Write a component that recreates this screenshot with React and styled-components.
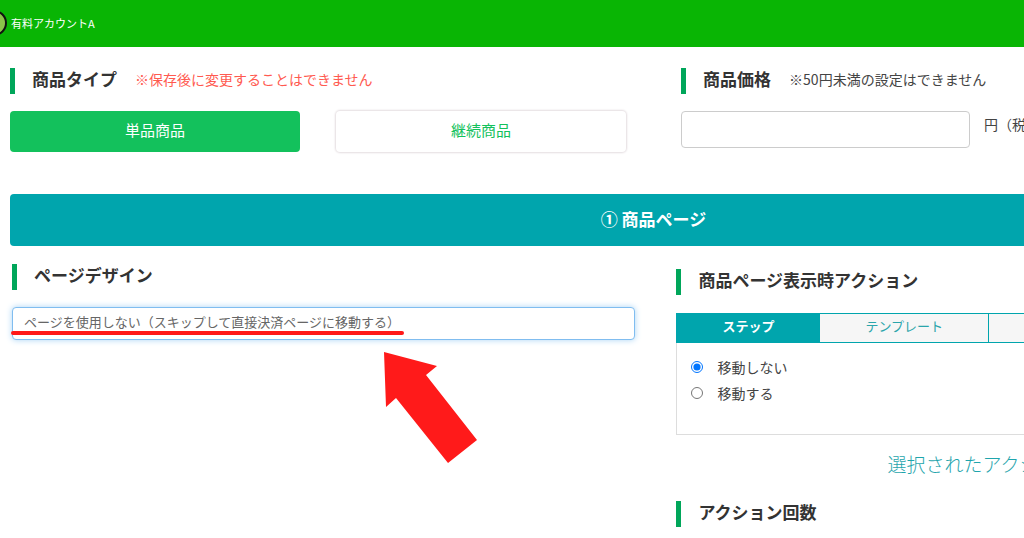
import React, { useState } from "react";
import styled, { createGlobalStyle } from "styled-components";

const tabs = ["ステップ", "テンプレート", "テキスト"];
const moves = ["移動しない", "移動する"];

const App = () => {
  const [type, setType] = useState("単品商品");
  const [tab, setTab] = useState("ステップ");
  const [move, setMove] = useState("移動しない");

  return (
    <>
      <GlobalStyle />
      {/*header starts*/}
      <Header>
        <Avatar />
        <span>有料アカウントA</span>
      </Header>
      {/*header ends*/}

      <Main>
        {/*type and price starts*/}
        <TopRow>
          <section>
            <Title>
              商品タイプ
              <Note $red>※保存後に変更することはできません</Note>
            </Title>
            <TypeButtons>
              {["単品商品", "継続商品"].map((name) => (
                <TypeButton
                  key={name}
                  type="button"
                  $active={type === name}
                  onClick={() => setType(name)}
                >
                  {name}
                </TypeButton>
              ))}
            </TypeButtons>
          </section>
          <section>
            <Title>
              <label htmlFor="price">商品価格</label>
              <Note>※50円未満の設定はできません</Note>
            </Title>
            <PriceRow>
              <PriceInput id="price" type="text" />
              <span>円（税込）</span>
            </PriceRow>
          </section>
        </TopRow>
        {/*type and price ends*/}

        <Banner>① 商品ページ</Banner>

        {/*page settings starts*/}
        <PageRow>
          <Design>
            <Title>
              <label htmlFor="design">ページデザイン</label>
            </Title>
            <SelectBox>
              <Select id="design">
                <option>
                  ページを使用しない（スキップして直接決済ページに移動する）
                </option>
              </Select>
              <Underline />
              <Arrow viewBox="0 0 94 112" aria-hidden="true">
                <path d="M0 0 53 14 42 23 93 88 64 111 12 46 2 55Z" />
              </Arrow>
            </SelectBox>
          </Design>
          <Actions>
            <Title>商品ページ表示時アクション</Title>
            <Tabs>
              {tabs.map((name) => (
                <Tab
                  key={name}
                  type="button"
                  $active={tab === name}
                  onClick={() => setTab(name)}
                >
                  {name}
                </Tab>
              ))}
            </Tabs>
            <Panel>
              {moves.map((name) => (
                <Choice key={name}>
                  <input
                    type="radio"
                    name="move"
                    checked={move === name}
                    onChange={() => setMove(name)}
                  />
                  {name}
                </Choice>
              ))}
            </Panel>
            <Selected>選択されたアクション</Selected>
            <Title>アクション回数</Title>
          </Actions>
        </PageRow>
        {/*page settings ends*/}
      </Main>
    </>
  );
};

const GlobalStyle = createGlobalStyle`
  * {
    box-sizing: border-box;
  }
  body {
    margin: 0;
    overflow-x: hidden;
    background: #fff;
    color: #444;
    font-family: "Noto Sans CJK JP", sans-serif;
    font-size: 14px;
    font-weight: 400;
    line-height: 20px;
  }
  button, input, select {
    font: inherit;
  }
`;

const Header = styled.header`
  display: flex;
  align-items: center;
  gap: 4px;
  height: 47px;
  padding-bottom: 1px;
  background: #09b504;
  color: #fff;
  font-size: 11px;
`;

const Avatar = styled.div`
  width: 26px;
  height: 26px;
  margin-left: -19px;
  border: 2px solid #111;
  border-radius: 50%;
  background: #8bc34a;
`;

const Main = styled.main`
  padding-left: 10px;
  overflow: hidden;
`;

const TopRow = styled.div`
  display: grid;
  grid-template-columns: 65% minmax(0, 1fr);
  column-gap: 12px;
  padding-top: 21px;
`;

const Title = styled.h2`
  display: flex;
  align-items: center;
  height: 26px;
  margin: 0;
  padding: 0 0 4px 17px;
  border-left: 5px solid #00a65a;
  color: #333;
  font-size: 17px;
  font-weight: 700;
  line-height: 22px;
  white-space: nowrap;
`;

const Note = styled.span`
  margin-left: 18px;
  color: ${({ $red }) => ($red ? "#ff5a50" : "#444")};
  font-size: 14px;
  font-weight: 400;
`;

const TypeButtons = styled.div`
  display: grid;
  grid-template-columns: 1fr 1fr;
  gap: 36px;
  padding: 17px 43px 0 0;
`;

const TypeButton = styled.button`
  height: 41px;
  padding: 0 0 4px;
  border: none;
  border-radius: 4px;
  background: ${({ $active }) => ($active ? "#13c15c" : "#fff")};
  color: ${({ $active }) => ($active ? "#fff" : "#13c15c")};
  box-shadow: ${({ $active }) => ($active ? "none" : "0 0 2px 1px #e4dde0")};
  font-size: 15px;
  cursor: pointer;
`;

const PriceRow = styled.div`
  display: flex;
  gap: 14px;
  padding-top: 17px;
  white-space: nowrap;

  span {
    margin-top: 3px;
  }
`;

const PriceInput = styled.input`
  flex: none;
  width: 289px;
  height: 37px;
  padding: 0 12px;
  border: 1px solid #ccc;
  border-radius: 4px;
`;

const Banner = styled.h1`
  margin: 42px 0 0;
  padding: 12px 0 14px 273px;
  border-radius: 4px 0 0 4px;
  background: #00a5ad;
  color: #fff;
  font-size: 17px;
  font-weight: 700;
  line-height: 26px;
  text-align: center;
`;

const PageRow = styled.div`
  display: grid;
  grid-template-columns: 62% minmax(0, 1fr);
  column-gap: 37px;
  padding-left: 2px;
`;

const Design = styled.section`
  padding: 18px 4px 0 0;
`;

const SelectBox = styled.div`
  position: relative;
  margin-top: 17px;
`;

const Select = styled.select`
  display: block;
  width: 100%;
  height: 33px;
  padding: 0 11px 3px;
  appearance: none;
  border: 1px solid #80bdf0;
  border-radius: 4px;
  background: #fff;
  box-shadow: 0 0 6px #a8d4f5;
  color: #666;
  font-size: 13px;
`;

const Underline = styled.div`
  position: absolute;
  top: 24px;
  left: -1px;
  width: 393px;
  height: 4px;
  border-radius: 2px;
  background: #ff1818;
`;

const Arrow = styled.svg`
  position: absolute;
  top: 45px;
  left: 372px;
  width: 94px;
  height: 112px;
  fill: #ff1a1a;
`;

const Actions = styled.section`
  padding-top: 23px;
`;

const Tabs = styled.div`
  display: flex;
  margin-top: 18px;
  overflow: hidden;
`;

const Tab = styled.button`
  flex: none;
  height: 30px;
  padding: 0 45px 4px;
  border: 1px solid #00a5ad;
  border-left-width: ${({ $active }) => ($active ? "1px" : "0")};
  background: ${({ $active }) => ($active ? "#00a5ad" : "#f6f6f6")};
  color: ${({ $active }) => ($active ? "#fff" : "#2aa5ab")};
  font-size: 13px;
  font-weight: ${({ $active }) => ($active ? 700 : 400)};
  cursor: pointer;
`;

const Panel = styled.div`
  height: 92px;
  padding: 11px 14px;
  border: 1px solid #ddd;
  border-top: none;
  border-right: none;
`;

const Choice = styled.label`
  display: flex;
  align-items: center;
  gap: 14px;
  line-height: 26px;

  input {
    width: 12px;
    height: 12px;
    margin: 0;
  }
`;

const Selected = styled.p`
  margin: 15px 0 23px;
  padding-left: 211px;
  color: #1fa5ad;
  font-size: 19px;
  font-weight: 300;
  line-height: 28px;
  white-space: nowrap;
`;

export default App;
